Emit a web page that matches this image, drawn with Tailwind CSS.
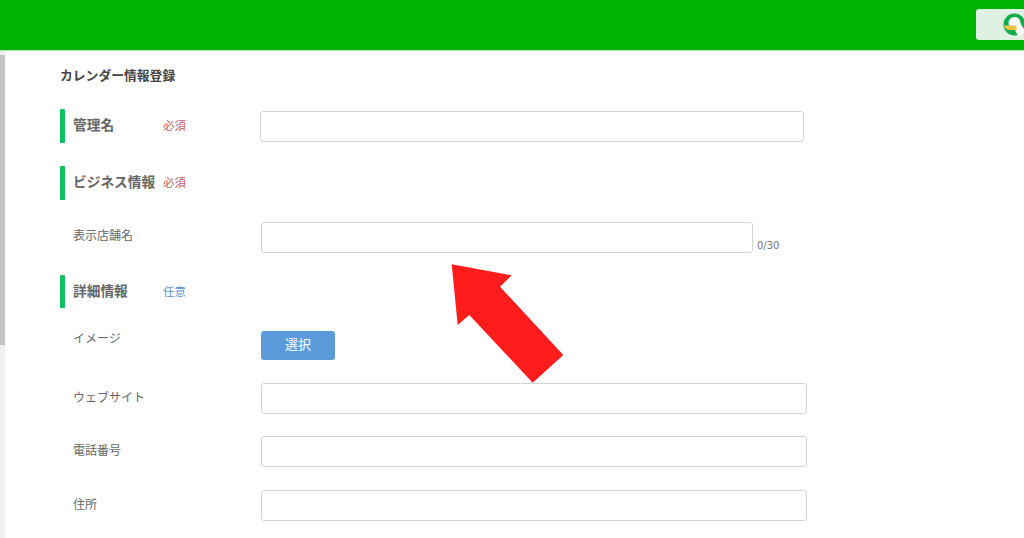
<!DOCTYPE html>
<html lang="ja">
<head>
  <meta charset="UTF-8" />
  <title>カレンダー情報登録</title>
  <script src="https://cdn.jsdelivr.net/npm/@tailwindcss/browser@4"></script>
</head>
<body class="relative w-[1024px] h-[538px] overflow-hidden bg-white font-['Noto_Sans_CJK_JP','Noto_Sans',sans-serif] text-[#666]">
  <!-- header -->
  <header class="h-[51px] bg-[#00b300] flex items-start pt-[9px] pl-[976px] overflow-hidden border-b border-[#a8e6a8]">
    <div class="w-[80px] h-[31px] shrink-0 rounded-[3px] bg-[#dff1e2] pl-[27px] pt-[4px]">
      <svg width="24" height="24" viewBox="0 0 24 24">
        <circle cx="11.5" cy="11.5" r="11" fill="#0fae4b" />
        <circle cx="11.5" cy="10" r="6" fill="#fff" />
        <path d="M11 5h3c2 0 3 2 3 5l6 9-8 4-3-6z" fill="#fff" />
        <path d="M1 12.500h12l1 4.500H5c-2-.5-3.500-2.500-4-4.500z" fill="#f5c242" />
      </svg>
    </div>
  </header>

  <div class="flex h-[487px]">
    <!-- scrollbar -->
    <div class="w-[5px] bg-[#f0f0f0] pt-[4px] shrink-0">
      <div class="h-[290px] bg-[#c4c4c4]"></div>
    </div>

    <main class="pl-[55px] flex-1">
      <h1 class="text-[12.8px] leading-[18px] font-bold text-[#444] pt-[15px] h-[58px]">カレンダー情報登録</h1>

      <div class="flex items-center h-[34px]">
        <div class="w-[5px] h-[34px] bg-[#0fc05f] rounded-[1px]"></div>
        <span class="ml-[8px] w-[90px] text-[13.7px] font-bold mb-[3px]">管理名</span>
        <span class="text-[11.5px] text-[#c0605f]">必須</span>
        <input class="ml-[74px] w-[544px] h-[31px] border border-[#d4d4d4] rounded-[3px] bg-white" />
      </div>

      <div class="flex items-center h-[34px] mt-[23px]">
        <div class="w-[5px] h-[34px] bg-[#0fc05f] rounded-[1px]"></div>
        <span class="ml-[8px] w-[90px] text-[13.7px] font-bold whitespace-nowrap mb-[3px]">ビジネス情報</span>
        <span class="text-[11.5px] text-[#c0605f]">必須</span>
      </div>

      <div class="flex items-center h-[31px] mt-[22px]">
        <span class="ml-[13px] w-[188px] text-[12px] mb-[6px]">表示店舗名</span>
        <input class="w-[492px] h-[31px] border border-[#d4d4d4] rounded-[3px] bg-white" />
        <span class="ml-[4px] mt-[16px] text-[10px] leading-[14px] text-[#777] font-['DejaVu_Sans',sans-serif]">0/30</span>
      </div>

      <div class="flex items-center h-[33px] mt-[22px]">
        <div class="w-[5px] h-[33px] bg-[#0fc05f] rounded-[1px]"></div>
        <span class="ml-[8px] w-[90px] text-[13.7px] font-bold mb-[3px]">詳細情報</span>
        <span class="text-[11.5px] text-[#5b93c7]">任意</span>
      </div>

      <div class="flex items-start h-[30px] mt-[23px]">
        <span class="ml-[13px] w-[188px] text-[12px] leading-[16px] -mt-[1px]">イメージ</span>
        <button class="w-[74px] h-[29px] rounded-[3px] bg-[#5b9bdc] text-white text-[13px] pb-[3px]">選択</button>
      </div>

      <div class="flex items-center h-[31px] mt-[22px]">
        <span class="ml-[13px] w-[188px] text-[12px] mb-[4px]">ウェブサイト</span>
        <input class="w-[546px] h-[31px] border border-[#d4d4d4] rounded-[3px] bg-white" />
      </div>

      <div class="flex items-center h-[31px] mt-[22px]">
        <span class="ml-[13px] w-[188px] text-[12px] mb-[4px]">電話番号</span>
        <input class="w-[546px] h-[31px] border border-[#d4d4d4] rounded-[3px] bg-white" />
      </div>

      <div class="flex items-center h-[31px] mt-[23px]">
        <span class="ml-[13px] w-[188px] text-[12px] mb-[4px]">住所</span>
        <input class="w-[546px] h-[31px] border border-[#d4d4d4] rounded-[3px] bg-white" />
      </div>
    </main>
  </div>

  <!-- annotation arrow -->
  <svg class="absolute left-0 top-0 pointer-events-none" width="1024" height="538">
    <polygon points="451.7,264.3 511.7,275.3 500,286.7 563.3,355 532.7,382.7 469.3,315 457.7,325" fill="#ff1c1c" />
  </svg>
</body>
</html>
